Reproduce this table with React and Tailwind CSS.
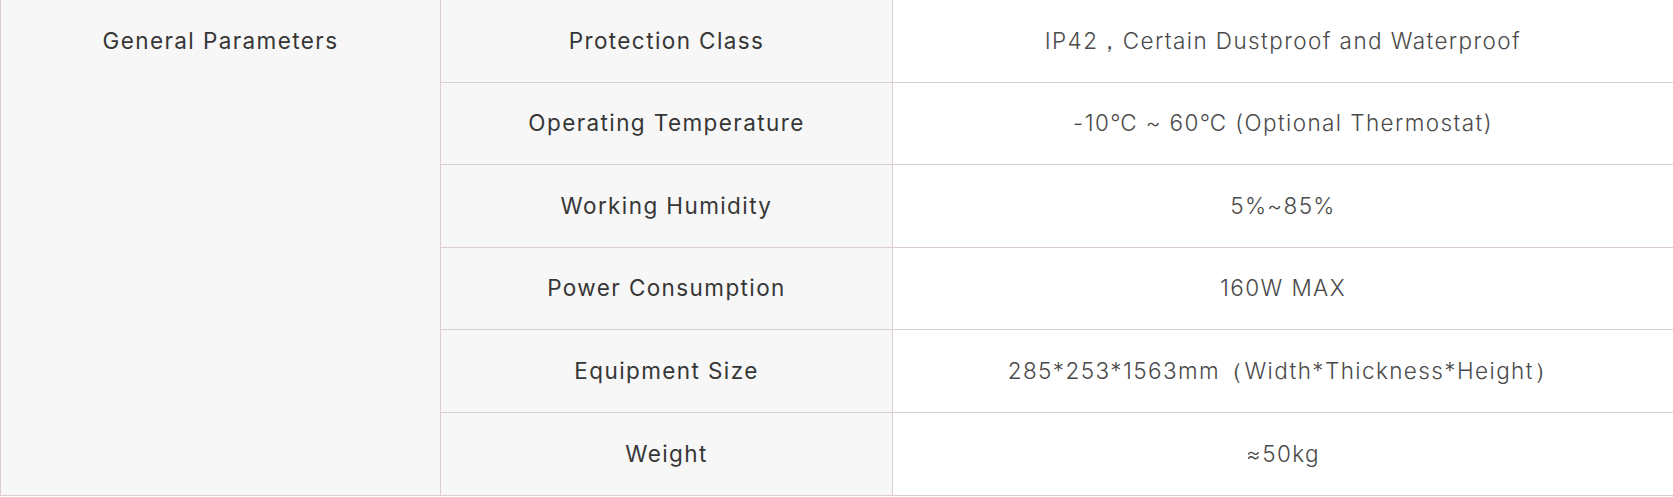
import React from 'react';

const rows = [
  { label: 'Protection Class', value: 'IP42，Certain Dustproof and Waterproof' },
  { label: 'Operating Temperature', value: '-10℃ ~ 60℃ (Optional Thermostat)' },
  { label: 'Working Humidity', value: '5%~85%' },
  { label: 'Power Consumption', value: '160W MAX' },
  { label: 'Equipment Size', value: '285*253*1563mm（Width*Thickness*Height）' },
  { label: 'Weight', value: '≈50kg' },
];

function App() {
  return (
    <div className="w-full bg-white font-['Inter','Noto_Sans',sans-serif] text-[#363636]">
      <div className="flex border-l border-b border-[#dccdd2]">
        {/* first column, spans every row */}
        <div className="w-[440px] shrink-0 border-r border-[#dccdd2] bg-[#f7f7f7]">
          <div className="flex h-[82.5px] items-center justify-center text-[22.5px] font-normal tracking-[1.4px]">
            General Parameters
          </div>
        </div>

        {/* label / value rows */}
        <div className="flex flex-1 flex-col">
          {rows.map((row, i) => (
            <div
              key={row.label}
              className={
                'grid h-[82.5px] grid-cols-[452px_1fr] ' +
                (i < rows.length - 1 ? 'border-b border-[#dccdd2]' : '')
              }
            >
              <div className="flex items-center justify-center border-r border-[#dccdd2] bg-[#f7f7f7] text-[22.5px] font-normal tracking-[1.4px]">
                {row.label}
              </div>
              <div className="flex items-center justify-center text-[22.5px] font-light tracking-[1.4px] text-[#4a4a4a]">
                {row.value}
              </div>
            </div>
          ))}
        </div>
      </div>
    </div>
  );
}

export default App;
